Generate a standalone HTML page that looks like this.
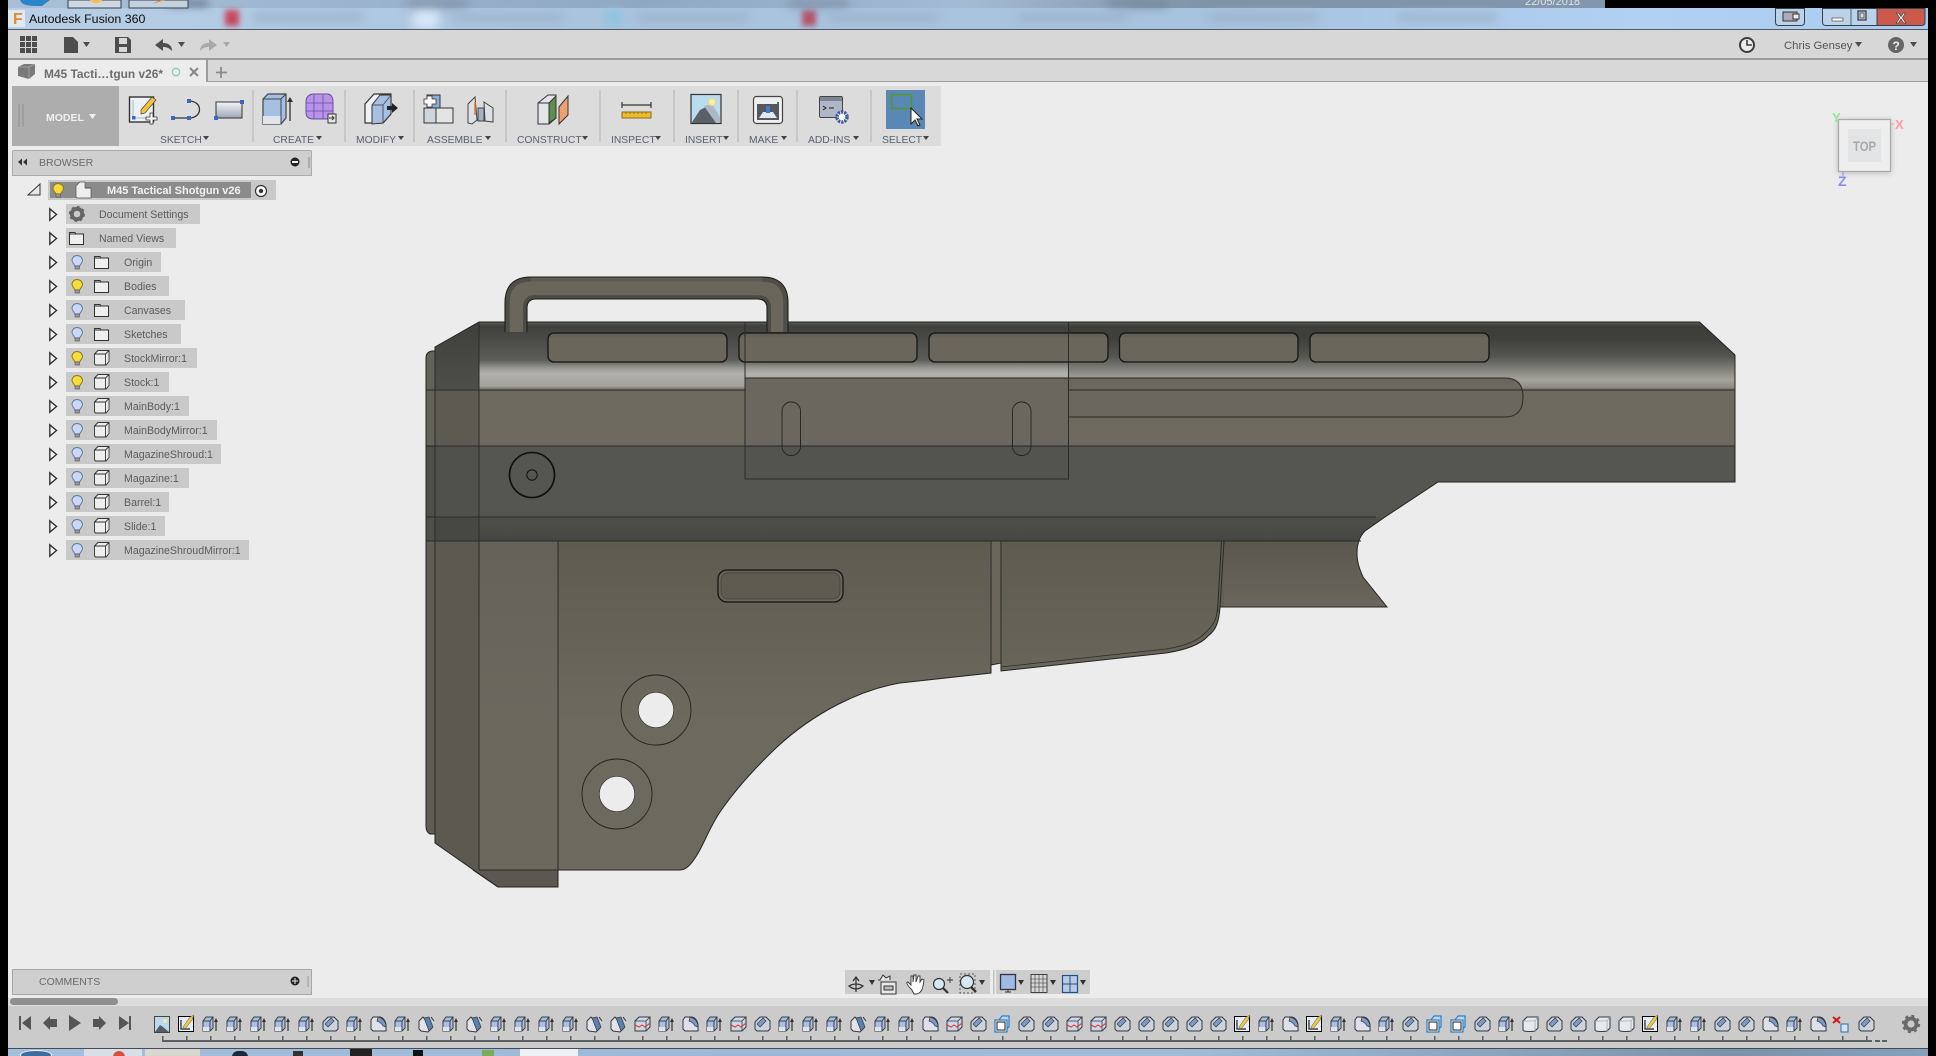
<!DOCTYPE html>
<html><head><meta charset="utf-8"><title>Autodesk Fusion 360</title>
<style>
html,body{margin:0;padding:0;width:1936px;height:1056px;overflow:hidden;background:#000}
.a{position:absolute}
svg{position:absolute;left:0;top:0}
text{font-family:"Liberation Sans",sans-serif}
.r{fill:#c9c9c9}.t{font-size:10.6px;fill:#5c5c5c}
.l{font-size:10.3px;fill:#5b6072}
</style></head><body>
<div class="a" style="left:8px;top:0;width:1597px;height:8px;background:linear-gradient(90deg,#a9bfd6,#9db5cf 20%,#8fa8c2 40%,#a3bbd4 60%,#7f93a8 75%,#8297ad);overflow:hidden"></div>
<div class="a" style="left:8px;top:8px;width:1920px;height:21px;background:linear-gradient(90deg,#b8cfe6,#aac4de 30%,#a8c3e0 65%,#b2d0f2 85%,#aacbf0)"></div>
<div class="a" style="left:8px;top:0;width:1597px;height:29px;overflow:hidden">
<div class="a" style="left:217px;top:10px;width:14px;height:16px;background:#c9485e;filter:blur(3px)"></div>
<div class="a" style="left:405px;top:8px;width:26px;height:21px;background:#d7e8f8;filter:blur(5px)"></div>
<div class="a" style="left:598px;top:10px;width:16px;height:16px;background:#8fc4e0;filter:blur(4px)"></div>
<div class="a" style="left:794px;top:10px;width:14px;height:16px;background:#b4546c;filter:blur(3px)"></div>
<div class="a" style="left:160px;top:0;width:40px;height:7px;background:#6f8198;filter:blur(4px)"></div>
<div class="a" style="left:400px;top:0;width:60px;height:7px;background:#7b8da3;filter:blur(5px)"></div>
<div class="a" style="left:780px;top:0;width:60px;height:7px;background:#7b8da3;filter:blur(5px)"></div>
<div class="a" style="left:1100px;top:0;width:60px;height:7px;background:#71849a;filter:blur(5px)"></div>
<div class="a" style="left:245px;top:13px;width:110px;height:9px;background:#9db3cc;filter:blur(5px)"></div>
<div class="a" style="left:445px;top:13px;width:110px;height:9px;background:#9db3cc;filter:blur(5px)"></div>
<div class="a" style="left:630px;top:13px;width:110px;height:9px;background:#9db3cc;filter:blur(5px)"></div>
<div class="a" style="left:820px;top:13px;width:110px;height:9px;background:#9db3cc;filter:blur(5px)"></div>
<div class="a" style="left:1010px;top:13px;width:110px;height:9px;background:#9db3cc;filter:blur(5px)"></div>
<div class="a" style="left:1200px;top:13px;width:110px;height:9px;background:#9db3cc;filter:blur(5px)"></div>
<div class="a" style="left:1390px;top:13px;width:100px;height:9px;background:#9db3cc;filter:blur(5px)"></div>
</div>
<div class="a" style="left:8px;top:29px;width:1920px;height:1px;background:#4f5a66"></div>
<div class="a" style="left:8px;top:30px;width:1920px;height:28px;background:#d7d7d7"></div>
<div class="a" style="left:8px;top:58px;width:1920px;height:2px;background:#9a9a9a"></div>
<div class="a" style="left:8px;top:60px;width:1920px;height:21px;background:#d8d8d8"></div>
<div class="a" style="left:8px;top:81px;width:1920px;height:1px;background:#9c9c9c"></div>
<div class="a" style="left:8px;top:82px;width:1920px;height:916px;background:#ececec"></div>
<div class="a" style="left:8px;top:60px;width:198px;height:22px;background:#ececec"></div>
<div class="a" style="left:206px;top:60px;width:2px;height:22px;background:#9c9c9c"></div>
<div class="a" style="left:8px;top:998px;width:1920px;height:8px;background:#dcdcdc"></div>
<div class="a" style="left:10px;top:998px;width:108px;height:7px;background:#8f8f8f;border-radius:4px"></div>
<div class="a" style="left:8px;top:1006px;width:1920px;height:42px;background:#cbcbcb"></div>
<div class="a" style="left:8px;top:1048px;width:1920px;height:1px;background:#444c55"></div>
<div class="a" style="left:8px;top:1049px;width:1920px;height:7px;background:linear-gradient(90deg,#a4bfdc,#9cb8d6 40%,#a2bcd8 60%,#7d92aa 90%,#86a0bc);overflow:hidden">
<div class="a" style="left:76px;top:0;width:58px;height:7px;background:#d8dfe6"></div>
<div class="a" style="left:137px;top:0;width:55px;height:7px;background:#d8d8d0"></div>
<div class="a" style="left:512px;top:0;width:58px;height:7px;background:#eef2f6"></div>
<div class="a" style="left:224px;top:2px;width:16px;height:6px;background:#1c2a3c;border-radius:8px 8px 0 0"></div>
<div class="a" style="left:285px;top:2px;width:10px;height:6px;background:#333"></div>
<div class="a" style="left:342px;top:0;width:22px;height:7px;background:#222"></div>
<div class="a" style="left:405px;top:1px;width:10px;height:6px;background:#111"></div>
<div class="a" style="left:474px;top:1px;width:12px;height:6px;background:#7cab5a"></div>
<div class="a" style="left:105px;top:2px;width:12px;height:6px;background:#d6503a;border-radius:6px 6px 0 0"></div>
<div class="a" style="left:12px;top:1px;width:30px;height:8px;border:1px solid #f0f6fc;border-radius:50%;background:#3d6da0"></div>
</div>
<div class="a" style="left:1605px;top:0;width:331px;height:8px;background:#000"></div>
<div class="a" style="left:0;top:0;width:8px;height:1056px;background:#000"></div>
<div class="a" style="left:1928px;top:0;width:8px;height:1056px;background:#000"></div>
<!-- toolbar backgrounds -->
<div class="a" style="left:12px;top:86px;width:929px;height:60px;background:#dcdcdc"></div>
<div class="a" style="left:12px;top:86px;width:107px;height:60px;background:#adadad"></div>
<div class="a" style="left:12px;top:150px;width:298px;height:24px;background:#cfcfcf;border:1px solid #ababab;border-radius:2px 2px 0 0"></div>
<div class="a" style="left:12px;top:969px;width:298px;height:24px;background:#cfcfcf;border:1px solid #a8a8a8"></div>
<div class="a" style="left:845px;top:970px;width:145px;height:24px;background:#cdcdcd"></div>
<div class="a" style="left:996px;top:970px;width:94px;height:24px;background:#cdcdcd"></div>

<svg width="1936" height="1056" viewBox="0 0 1936 1056">
<defs>
<linearGradient id="top" gradientUnits="userSpaceOnUse" x1="0" y1="322" x2="0" y2="390">
<stop offset="0" stop-color="#5a5a56"/><stop offset=".06" stop-color="#3f3f3b"/><stop offset=".34" stop-color="#4f504c"/><stop offset=".56" stop-color="#5c5d59"/><stop offset=".68" stop-color="#9a9993"/><stop offset=".76" stop-color="#b2b0ab"/><stop offset=".94" stop-color="#a6a49d"/><stop offset="1" stop-color="#6e6a61"/></linearGradient>
<linearGradient id="topr" gradientUnits="userSpaceOnUse" x1="0" y1="322" x2="0" y2="390">
<stop offset="0" stop-color="#5a5a56"/><stop offset=".06" stop-color="#3e3e39"/><stop offset=".25" stop-color="#3f3f3b"/><stop offset=".5" stop-color="#545551"/><stop offset=".68" stop-color="#7d7c76"/><stop offset=".85" stop-color="#a5a39c"/><stop offset=".96" stop-color="#8e8c84"/><stop offset="1" stop-color="#6e6a61"/></linearGradient>
<linearGradient id="ltop" gradientUnits="userSpaceOnUse" x1="0" y1="322" x2="0" y2="390"><stop offset="0" stop-color="#3f3f3b"/><stop offset="1" stop-color="#4e4e4a"/></linearGradient>
<linearGradient id="lb" x1="0" y1="0" x2="0" y2="1"><stop offset="0" stop-color="#50504b"/><stop offset="1" stop-color="#464642"/></linearGradient>
<linearGradient id="low" gradientUnits="userSpaceOnUse" x1="0" y1="541" x2="0" y2="720"><stop offset="0" stop-color="#5e5b51"/><stop offset="1" stop-color="#6c695f"/></linearGradient>
<linearGradient id="low2" gradientUnits="userSpaceOnUse" x1="0" y1="541" x2="0" y2="720"><stop offset="0" stop-color="#65625a"/><stop offset="1" stop-color="#6b685e"/></linearGradient>
<linearGradient id="mz" x1="0" y1="0" x2="0" y2="1"><stop offset="0" stop-color="#5b574e"/><stop offset="1" stop-color="#6b675e"/></linearGradient>
<linearGradient id="sq" x1="0" y1="0" x2="0" y2="1"><stop offset="0" stop-color="#5f5c53"/><stop offset=".2" stop-color="#6a665c"/><stop offset="1" stop-color="#6a665c"/></linearGradient>
<clipPath id="g"><path id="sil" d="M479 322H1699.5L1735 355V482H1438L1385 517L1365 531C1359 537 1357 545 1357 553C1357 563 1360 570 1363 577L1387 607H1220C1219 622 1216 630 1208 636C1200 645 1185 650 1166 653L1001 671V663L991 665V673L900 683C860 690 815 712 777 747C755 768 735 790 720 812C708 830 703 847 695 858C690 866 685 870 680 870H558V887H498L435 843V834H430Q426 832 426 826V358Q426 352 432 351H435V347Z"/></clipPath>
<g id="e"><path d="M1 5L4 1H11V12L8 15H1Z" fill="#a9c0de" stroke="#3a3f48"/><path d="M1 11H8V15H1Z" fill="#dfe3ea"/><path d="M1 5H8V15M8 5L11 1" fill="none" stroke="#3a3f48"/><path d="M14 15V5" stroke="#333" stroke-width="1.2"/><path d="M12 6L14 2L16 6Z" fill="#333"/></g>
<g id="c"><path d="M1 6L6 1H12L16 5V13L14 15H3L1 13Z" fill="#cdd3dd" stroke="#33383f"/><path d="M3 8L9 2L12 5L6 11Z" fill="#7f9bc8" stroke="#33383f" stroke-width=".7"/></g>
<g id="r"><path d="M1 4L3 1H10C14 2 16 6 16 10V15H3L1 13Z" fill="#dfe2e8" stroke="#33383f"/><path d="M8 1C13 2 16 6 16 11L13 10C12 8 10 6 7 5Z" fill="#7e9ac6" stroke="#33383f" stroke-width=".7"/></g>
<g id="m"><path d="M1 5L5 1L14 12L10 16L3 15L1 13Z" fill="#e3e5ea" stroke="#33383f"/><path d="M6 2L11 1L15 11L11 15Z" fill="#5f7fb2" stroke="#33383f" stroke-width=".7"/><path d="M13 1L16 5" stroke="#333"/></g>
<g id="w"><path d="M1 5L5 1H16V11L12 15H1Z" fill="#cdd7e6" stroke="#33383f"/><path d="M1 5H12V15M12 5L16 1" fill="none" stroke="#33383f" stroke-width=".8"/><path d="M1 9L5 11L8 9L11 11L16 7" fill="none" stroke="#d33" stroke-width="1"/></g>
<g id="k"><path d="M5 4L8 0H15V11L12 13" fill="#bdd5f0" stroke="#0a6fc2"/><rect x="1" y="4" width="12" height="12" fill="#f0f0f0" stroke="#0a6fc2"/><rect x="3" y="6" width="8" height="8" fill="#fff" stroke="#222"/></g>
<g id="b"><path d="M1 5L5 1H16V12L13 15Q8 16 2 15L1 14Z" fill="#e8eaee" stroke="#33383f"/><path d="M1 5H13V15M13 5L16 1" fill="none" stroke="#9aa" stroke-width=".8"/></g>
<g id="s"><rect x=".5" y=".5" width="15" height="15" fill="#e4ecf6" stroke="#000"/><path d="M3 4V13H12" fill="none" stroke="#222" stroke-width="1.2"/><path d="M5 11L12 1L16 -1L14 4L7 13Z" fill="#f0c83a" stroke="#555" stroke-width=".5"/></g>
<g id="i"><rect x=".5" y=".5" width="15" height="16" fill="#bcd8ec" stroke="#444"/><path d="M1 16L6 9L9 11L15 16Z" fill="#555b64"/><circle cx="11" cy="5" r="2" fill="#f6e9a8"/></g>
<g id="bu"><path d="M6 .5C9.2.5 11.5 2.8 11.5 5.5C11.5 8 9 9 8.8 11H3.8C3.6 9 1 8 1 5.5C1 2.8 3.2.5 6 .5Z" fill="#c8d8f7" stroke="#6a78a0"/><rect x="4" y="11" width="4.5" height="3" fill="#999" stroke="#555" stroke-width=".6"/></g>
<g id="by"><path d="M6 .5C9.2.5 11.5 2.8 11.5 5.5C11.5 8 9 9 8.8 11H3.8C3.6 9 1 8 1 5.5C1 2.8 3.2.5 6 .5Z" fill="#f6dc3a" stroke="#8a7a20"/><rect x="4" y="11" width="4.5" height="3" fill="#999" stroke="#555" stroke-width=".6"/></g>
<g id="fo"><path d="M.5 1.5H6L7 3H14.5V13.5H.5ZM.5 3H7" fill="#efefef" stroke="#333" stroke-width="1"/></g>
<g id="bd"><path d="M.5 4L4 .5H15V11.5L12 15H2Q.5 15 .5 13.5ZM.5 4H11.5V15M11.5 4L15 .5" fill="#eeeeee" stroke="#333" stroke-width=".9"/></g>
<g id="tri"><path d="M.8 .8L7.5 6.5L.8 12.2Z" fill="#f2f2f2" stroke="#333" stroke-width="1.4"/></g>
</defs>

<!-- title -->
<rect x="8" y="10" width="17" height="17" fill="#f0f3f7" opacity=".7"/>
<text x="13" y="24" font-size="16" font-weight="bold" fill="#e08a2e">F</text>
<text x="29" y="23" font-size="12.4" fill="#0c0c0c">Autodesk Fusion 360</text>
<text x="1525" y="5" font-size="11" fill="#f0f0f0" opacity=".85">22/05/2018</text>
<g stroke="#34404c" stroke-width="1" fill="#a9c2dc">
<path d="M68 0H121V8H68Z" fill="#cdd8e2"/><path d="M129 0H188V8H129Z" fill="#c4d2e0"/>
<path d="M1775.5 8.5H1804.5V22Q1804.5 25.5 1801 25.5H1779Q1775.5 25.5 1775.5 22Z" fill="#bcd2ea"/>
<path d="M1822.5 8.5H1877V25.5H1826Q1822.5 25.5 1822.5 22Z" fill="#bcd2ea"/>
<path d="M1877 8.5H1925V22Q1925 25.5 1921.5 25.5H1877Z" fill="#cc5a4c"/>
</g>
<path d="M1851 9V25" stroke="#566"/>
<path d="M20 0C22 6 30 6 42 6L50 0Z" fill="#2a86c8"/>
<path d="M90 0C92 4 100 4 102 0Z" fill="#f0c050"/><path d="M152 4L160 0H165Z" fill="#d98b2e"/>
<rect x="1783" y="12" width="14" height="9" fill="#aab" stroke="#333"/><rect x="1793" y="14" width="6" height="5" fill="#eee" stroke="#333"/>
<rect x="1832" y="18" width="11" height="3" fill="#fff" stroke="#333" stroke-width=".6"/>
<rect x="1858" y="11" width="8" height="9" fill="none" stroke="#333" stroke-width="1.2"/><rect x="1860" y="13" width="4" height="5" fill="#ddd" stroke="#333" stroke-width=".7"/>
<text x="1896" y="23" font-size="15" font-weight="bold" fill="#f4f4f4" stroke="#444" stroke-width=".7">X</text>

<!-- app bar -->
<g fill="#4d4d4d">
<rect x="20" y="36" width="5" height="5"/><rect x="26" y="36" width="5" height="5"/><rect x="32" y="36" width="5" height="5"/>
<rect x="20" y="42" width="5" height="5"/><rect x="26" y="42" width="5" height="5"/><rect x="32" y="42" width="5" height="5"/>
<rect x="20" y="48" width="5" height="5"/><rect x="26" y="48" width="5" height="5"/><rect x="32" y="48" width="5" height="5"/>
<path d="M64 37H73L78 42V53H64Z"/><path d="M83 42H90L86.5 47Z"/>
<path fill-rule="evenodd" d="M115 37H128L131 40V53H115ZM119 38V44H127V38ZM119 47V52H127V47Z"/>
<path d="M155 45L163 39V43C169 43 172 46 172 51C169 48 167 47 163 47V51Z"/><path d="M178 42H185L181.5 47Z"/>
<path d="M1855 42H1862L1858.5 47Z"/><path d="M1910 42H1917L1913.5 47Z"/>
</g>
<g fill="#a9a9a9"><path d="M217 45L209 39V43C203 43 200 46 200 51C203 48 205 47 209 47V51Z"/><path d="M223 42H230L226.5 47Z"/></g>
<circle cx="1747" cy="45" r="7" fill="#ececec" stroke="#3c3c3c" stroke-width="2"/><path d="M1747 40V45H1752" fill="none" stroke="#3c3c3c" stroke-width="1.6"/>
<text x="1784" y="49" font-size="11.3" fill="#545454">Chris Gensey</text>
<circle cx="1896" cy="45" r="8" fill="#666"/><text x="1892.5" y="50" font-size="12" font-weight="bold" fill="#eee">?</text>

<!-- tab -->
<path d="M18 67L24 64H35V74L29 79L18 76Z" fill="#7a7a7a"/><path d="M18 67H29V79M29 67L35 64" stroke="#aaa" fill="none" stroke-width=".8"/>
<text x="44" y="78" font-size="12" font-weight="bold" fill="#6d6d6d" textLength="119" lengthAdjust="spacingAndGlyphs">M45 Tacti…tgun v26*</text>
<circle cx="176" cy="72" r="3.7" fill="none" stroke="#84cdb8" stroke-width="1.3"/>
<path d="M190 68L198 76M198 68L190 76" stroke="#8a8a8a" stroke-width="2.2"/>
<path d="M221 67V78M216 72.5H227" stroke="#8a8a8a" stroke-width="1.8"/>

<!-- model -->
<path d="M19 104V127M23 104V127" stroke="#8f8f8f"/>
<text x="46" y="121" font-size="10.5" font-weight="bold" fill="#f0f0f0">MODEL</text>
<path d="M89 114H96L92.5 119Z" fill="#f0f0f0"/>
<!-- separators -->
<g fill="#c8c8c8"><rect x="252" y="90" width="2" height="52"/><rect x="344" y="90" width="2" height="52"/><rect x="413" y="90" width="2" height="52"/><rect x="505" y="90" width="2" height="52"/><rect x="599" y="90" width="2" height="52"/><rect x="673" y="90" width="2" height="52"/><rect x="737" y="90" width="2" height="52"/><rect x="796" y="90" width="2" height="52"/><rect x="870" y="90" width="2" height="52"/></g>
<!-- labels -->
<text x="160" y="143" class="l">SKETCH</text><path d="M203 136H209L206 140Z" fill="#444"/>
<text x="273" y="143" class="l">CREATE</text><path d="M316 136H322L319 140Z" fill="#444"/>
<text x="356" y="143" class="l">MODIFY</text><path d="M398 136H404L401 140Z" fill="#444"/>
<text x="427" y="143" class="l">ASSEMBLE</text><path d="M485 136H491L488 140Z" fill="#444"/>
<text x="517" y="143" class="l">CONSTRUCT</text><path d="M582 136H588L585 140Z" fill="#444"/>
<text x="611" y="143" class="l">INSPECT</text><path d="M655 136H661L658 140Z" fill="#444"/>
<text x="685" y="143" class="l">INSERT</text><path d="M723 136H729L726 140Z" fill="#444"/>
<text x="749" y="143" class="l">MAKE</text><path d="M781 136H787L784 140Z" fill="#444"/>
<text x="808" y="143" class="l">ADD-INS</text><path d="M853 136H859L856 140Z" fill="#444"/>
<text x="882" y="143" class="l">SELECT</text><path d="M923 136H929L926 140Z" fill="#444"/>
<!-- toolbar icons -->
<rect x="129.5" y="97" width="24" height="25" fill="#eef1f6" stroke="#333" stroke-width="1.4"/>
<path d="M133 100V118H150" fill="none" stroke="#8aa" stroke-width=".8"/><rect x="132" y="116" width="3.5" height="3.5" fill="#3a68c0"/>
<path d="M141 110L152 97L156 100L145 113L141 114Z" fill="#f2c43a" stroke="#444" stroke-width=".7"/>
<path d="M150 113H153V117H157V120H153V124H150V120H146V117H150Z" fill="#fff" stroke="#333" stroke-width=".8"/>
<path d="M173 118H188M189 101C203 101 203 118 189 118" fill="none" stroke="#333" stroke-width="1.3"/>
<rect x="171" y="116" width="4" height="4" fill="#3a68c0"/><rect x="187" y="116" width="4" height="4" fill="#3a68c0"/><rect x="187" y="99" width="4" height="4" fill="#3a68c0"/>
<defs><linearGradient id="rc" x1="0" y1="0" x2="0" y2="1"><stop offset="0" stop-color="#f5f5f7"/><stop offset="1" stop-color="#9ea7b8"/></linearGradient></defs>
<rect x="216" y="102" width="26" height="16" fill="url(#rc)" stroke="#333"/><rect x="240" y="100" width="4" height="4" fill="#3a68c0"/><rect x="214" y="116" width="4" height="4" fill="#3a68c0"/>
<path d="M263 99L268 94H286V118L281 124H263Z" fill="#a6c0e4" stroke="#444" stroke-width="1.2"/><path d="M263 116H281V124H263Z" fill="#dfe3ea"/><path d="M263 99H281V124M281 99L286 94" fill="none" stroke="#444"/>
<path d="M290 121V100" stroke="#333" stroke-width="1.3"/><path d="M287 102L290 97L293 102Z" fill="#333"/>
<path d="M306 102Q306 95 313 94H328Q333 95 333 102V116Q333 119 328 119H313Q306 119 306 112Z" fill="#b794e8" stroke="#6a4ba0"/>
<path d="M306 103H333M306 111H333M314 95V119M323 95V119" stroke="#6a4ba0" stroke-width=".8"/>
<rect x="328" y="114" width="8" height="9" fill="#e8e8e8" stroke="#333"/><path d="M329 118H333M332 116L334 118L332 120" stroke="#333" fill="none"/>
<path d="M365 123V104L374 94H391V114L383 123Z" fill="#f0f1f4" stroke="#333" stroke-width="1.2"/><path d="M372 124V105L380 95H391V114L383 123Z" fill="#a6c0e4" stroke="#333"/><path d="M372 105H383V123M383 105L391 95" stroke="#555" fill="none"/>
<path d="M387 106H392V103L398 108L392 113V110H387Z" fill="#222"/>
<rect x="435" y="108" width="18" height="15" fill="#e4e4e4" stroke="#333"/><rect x="424" y="108" width="12" height="15" fill="#cfd5dd" stroke="#333"/><rect x="427" y="95" width="13" height="13" fill="#8cabd6" stroke="#333"/>
<path d="M427 96H432V99H436V104H432V107H427V104H424V99H427Z" fill="#fff" stroke="#333" stroke-width=".8"/>
<path d="M468 123V104L475 97L477 120L472 124ZM484 102L493 108V122L485 121Z" fill="#dde0e6" stroke="#444"/><rect x="478" y="108" width="6" height="13" fill="#a6b2c4" stroke="#444"/><path d="M475 102V115" stroke="#d97a2e" stroke-width="1.5"/>
<path d="M538 103L548 95H556V118L549 124H538Z" fill="#e3e5ea" stroke="#333"/><path d="M549 103L556 96V118L549 123Z" fill="#5d8e4e" stroke="#333"/><path d="M538 103H549V124" fill="none" stroke="#333"/>
<path d="M559 107L568 96V115L559 124Z" fill="#eca16e" stroke="#333"/>
<path d="M622 102V108M651 102V108M622 105H651" stroke="#333" stroke-width="1.2"/>
<rect x="622" y="112" width="29" height="6" fill="#edb92f" stroke="#8a6a10"/><path d="M626 112v2M630 112v2M634 112v2M638 112v2M642 112v2M646 112v2" stroke="#8a6a10"/>
<rect x="691" y="94.5" width="30" height="29" fill="#b9dcef" stroke="#333" stroke-width="1.2"/>
<path d="M691.5 123L700 110L706 107L713 115L720 123Z" fill="#5a606a"/><path d="M704 106L712 104L720.5 118V123H716Z" fill="#aeb8c2"/>
<circle cx="712" cy="102" r="3.5" fill="#f9f0b0" stroke="#f1d87a"/>
<rect x="753.5" y="96.5" width="29" height="27" rx="3" fill="#efefef" stroke="#444" stroke-width="1.2"/><rect x="757" y="104" width="22" height="16" fill="#55585e"/><path d="M759 118L763 112H773L777 118Z" fill="#e3e6ea"/><rect x="766" y="106" width="4" height="7" fill="#3f7cc8"/><rect x="777" y="102" width="2" height="2" fill="#2a8a2a"/>
<rect x="819.5" y="96.5" width="23" height="21" rx="1.5" fill="#aeb6c8" stroke="#444"/><rect x="820" y="97" width="22" height="4" fill="#7f8590"/>
<path d="M823 106L826 108L823 110M829 108H834" stroke="#222" fill="none"/>
<circle cx="842" cy="117" r="5" fill="#fff" stroke="#3c5d96" stroke-width="3.5" stroke-dasharray="2.2 1"/><circle cx="842" cy="117" r="3" fill="#fff"/>
<rect x="886" y="90" width="39" height="39" fill="#5a88b5"/><rect x="891.5" y="94.5" width="20" height="14" fill="none" stroke="#4f9a1f" stroke-width="1.4"/>
<path d="M911 108V124L915 120L918 126L920 125L917 119H922Z" fill="#fff" stroke="#222"/>

<!-- browser head -->
<path d="M18 162L22 158.5V165.5ZM23 162L27 158.5V165.5Z" fill="#333"/>
<text x="39" y="166" font-size="10.5" fill="#6a6a6a">BROWSER</text>
<circle cx="295" cy="162" r="4.5" fill="#222"/><rect x="292" y="161" width="6" height="2" fill="#eee"/>
<path d="M309 157V168" stroke="#888"/><path d="M311 157V168" stroke="#bbb"/>
<!-- comments -->
<text x="39" y="985" font-size="10.5" fill="#6a6a6a">COMMENTS</text>
<circle cx="295" cy="981" r="4.5" fill="#222"/><path d="M292 981H298M295 978V984" stroke="#eee"/>
<path d="M308 976V987" stroke="#999"/>

<!-- tree -->
<path d="M28 195L40 184V195Z" fill="#e8e8e8" stroke="#333"/>
<rect x="48" y="180" width="228" height="20" class="r"/><rect x="50" y="182" width="201" height="16" fill="#8b8b8b"/>
<use href="#by" x="52" y="183"/>
<path d="M76 186L80 182H85V188H91V198H78Q76 198 76 196Z" fill="#eee" stroke="#555" stroke-width=".7"/><path d="M85 188L91 188" stroke="#555"/>
<text x="107" y="194" font-size="11" font-weight="bold" fill="#f2f2f2">M45 Tactical Shotgun v26</text>
<circle cx="261" cy="191" r="5.5" fill="#fff" stroke="#333" stroke-width="1.2"/><circle cx="261" cy="191" r="2.2" fill="#333"/>

<rect x="66" y="204" width="134" height="20" class="r"/><rect x="66" y="228" width="110" height="20" class="r"/><rect x="66" y="252" width="95" height="20" class="r"/><rect x="66" y="276" width="103" height="20" class="r"/><rect x="66" y="300" width="119" height="20" class="r"/><rect x="66" y="324" width="115" height="20" class="r"/><rect x="66" y="348" width="131" height="20" class="r"/><rect x="66" y="372" width="103" height="20" class="r"/><rect x="66" y="396" width="123" height="20" class="r"/><rect x="66" y="420" width="151" height="20" class="r"/><rect x="66" y="444" width="155" height="20" class="r"/><rect x="66" y="468" width="123" height="20" class="r"/><rect x="66" y="492" width="103" height="20" class="r"/><rect x="66" y="516" width="99" height="20" class="r"/><rect x="66" y="540" width="183" height="20" class="r"/>
<use href="#tri" x="49" y="208"/><use href="#tri" x="49" y="232"/><use href="#tri" x="49" y="256"/><use href="#tri" x="49" y="280"/><use href="#tri" x="49" y="304"/><use href="#tri" x="49" y="328"/><use href="#tri" x="49" y="352"/><use href="#tri" x="49" y="376"/><use href="#tri" x="49" y="400"/><use href="#tri" x="49" y="424"/><use href="#tri" x="49" y="448"/><use href="#tri" x="49" y="472"/><use href="#tri" x="49" y="496"/><use href="#tri" x="49" y="520"/><use href="#tri" x="49" y="544"/>
<circle cx="77" cy="214" r="5.2" fill="none" stroke="#666" stroke-width="3.8"/><circle cx="77" cy="214" r="6.8" fill="none" stroke="#666" stroke-width="2.4" stroke-dasharray="2.6 2.7"/>
<use href="#fo" x="69" y="231"/>
<use href="#bu" x="71" y="255"/><use href="#by" x="71" y="279"/><use href="#bu" x="71" y="303"/><use href="#bu" x="71" y="327"/><use href="#by" x="71" y="351"/><use href="#by" x="71" y="375"/><use href="#bu" x="71" y="399"/><use href="#bu" x="71" y="423"/><use href="#bu" x="71" y="447"/><use href="#bu" x="71" y="471"/><use href="#bu" x="71" y="495"/><use href="#bu" x="71" y="519"/><use href="#bu" x="71" y="543"/>
<use href="#fo" x="94" y="255"/><use href="#fo" x="94" y="279"/><use href="#fo" x="94" y="303"/><use href="#fo" x="94" y="327"/>
<use href="#bd" x="94" y="350"/><use href="#bd" x="94" y="374"/><use href="#bd" x="94" y="398"/><use href="#bd" x="94" y="422"/><use href="#bd" x="94" y="446"/><use href="#bd" x="94" y="470"/><use href="#bd" x="94" y="494"/><use href="#bd" x="94" y="518"/><use href="#bd" x="94" y="542"/>
<g class="t"><text x="99" y="218" class="t">Document Settings</text><text x="99" y="242" class="t">Named Views</text><text x="124" y="266" class="t">Origin</text><text x="124" y="290" class="t">Bodies</text><text x="124" y="314" class="t">Canvases</text><text x="124" y="338" class="t">Sketches</text><text x="124" y="362" class="t">StockMirror:1</text><text x="124" y="386" class="t">Stock:1</text><text x="124" y="410" class="t">MainBody:1</text><text x="124" y="434" class="t">MainBodyMirror:1</text><text x="124" y="458" class="t">MagazineShroud:1</text><text x="124" y="482" class="t">Magazine:1</text><text x="124" y="506" class="t">Barrel:1</text><text x="124" y="530" class="t">Slide:1</text><text x="124" y="554" class="t">MagazineShroudMirror:1</text></g>

<!-- viewcube -->
<rect x="1838.5" y="119.5" width="52" height="52" fill="#eeeeee" stroke="#a9a9a9" stroke-width="1.2" style="filter:drop-shadow(0 1px 3px rgba(0,0,0,.2))"/>
<rect x="1848" y="129" width="33" height="33" fill="#e3e4e6"/>
<text x="1853" y="151" font-size="14" font-weight="bold" fill="#a9a9ab" textLength="23" lengthAdjust="spacingAndGlyphs">TOP</text>
<text x="1832" y="122" font-size="13" fill="#8fe88f" font-weight="bold">Y</text>
<text x="1895" y="129" font-size="13" fill="#ff9c9c" font-weight="bold">X</text>
<text x="1838" y="186" font-size="14" fill="#8c8cf0" font-weight="bold">Z</text>
<path d="M1891 124H1894" stroke="#ff9c9c"/><path d="M1843 172V176" stroke="#8c8cf0"/>

<!-- gun body -->
<g clip-path="url(#g)">
<rect x="420" y="320" width="650" height="71" fill="url(#top)"/>
<rect x="1068" y="320" width="672" height="71" fill="url(#topr)"/>
<rect x="420" y="390" width="1320" height="56" fill="#6d695f"/>
<rect x="420" y="446" width="1320" height="71" fill="#555650"/>
<rect x="420" y="517" width="1320" height="24" fill="url(#lb)"/>
<rect x="420" y="541" width="1000" height="360" fill="url(#low)"/>
<rect x="479" y="541" width="79" height="330" fill="url(#low2)"/>
<rect x="1224" y="541" width="170" height="70" fill="url(#mz)"/>
<path d="M1068 378H1505Q1523 378 1523 397Q1523 417 1505 417H1068Z" fill="#6b675e"/>
<rect x="745" y="378" width="324" height="68" fill="#6b675e"/>
<rect x="745" y="446" width="324" height="33" fill="#535450"/>
<rect x="435" y="322" width="44" height="68" fill="url(#ltop)"/>
<rect x="435" y="390" width="44" height="56" fill="#5c5a51"/>
<rect x="435" y="446" width="44" height="71" fill="#50514b"/>
<rect x="435" y="517" width="44" height="24" fill="#484843"/>
<rect x="435" y="541" width="44" height="350" fill="#5b5950"/>
<rect x="420" y="340" width="15" height="110" fill="#62615a"/>
<rect x="420" y="446" width="15" height="95" fill="#4f4f4a"/>
<rect x="420" y="541" width="15" height="300" fill="#5f5d54"/>
<path d="M473 870H558V887H498Z" fill="#5a5850"/>
<rect x="991" y="541" width="10" height="140" fill="#6a665c"/>
</g>
<!-- lines -->
<g fill="none" stroke="#2a2a27" stroke-width="1">
<path d="M479 322V870M435 347V843M426 390H435" />
<path d="M435 390H745M426 446H1735M426 517H1376M426 541H1361M558 541V887M479 870H558M473 870L498 887"/>
<path d="M745 322V479H1068.500V322M745 378H1505Q1523 378 1523 397Q1523 417 1505 417H1068.500M1068 390H1735"/>
<path d="M991 541V673M1001 541V671M1224 541L1220 607M1221.500 541L1217.500 612"/>
<path d="M1001 667L1166 649C1185 646 1198 641 1206 632C1214 625 1217 618 1217.500 608" stroke-width=".8"/>
</g>
<use href="#sil" fill="none" stroke="#232321" stroke-width="1"/>
<!-- handle drawn over body -->
<path d="M505 332V303Q505 277 531 277H762Q788 277 788 303V332H767V308Q767 299 757 299H536Q527 299 527 308V332Z" fill="#6a665c"/>
<path d="M507.500 332V303Q507.500 279.500 531 279.500" fill="none" stroke="#4f4f49" stroke-width="4.500"/>
<path d="M762 279.500Q785.500 279.500 785.500 303V332" fill="none" stroke="#4f4f49" stroke-width="4.500"/>
<path d="M531 279.500H762" stroke="#5c5a52" stroke-width="4"/>
<path d="M536 297H757" stroke="#4c4c46" stroke-width="3.500"/>
<path d="M525 332V308Q525 297 536 297M757 297Q769 297 769 308V332" fill="none" stroke="#4c4c46" stroke-width="4"/>
<path d="M505 332V303Q505 277 531 277H762Q788 277 788 303V332M767 332V308Q767 299 757 299H536Q527 299 527 308V332" fill="none" stroke="#1e1e1c" stroke-width="1.100"/>
<!-- slots -->
<g fill="url(#sq)" stroke="#141412" stroke-width="1.3">
<rect x="548" y="333" width="179" height="29" rx="6"/><rect x="739" y="333" width="178" height="29" rx="6"/><rect x="929" y="333" width="179" height="29" rx="6"/><rect x="1119.500" y="333" width="178.500" height="29" rx="6"/><rect x="1310" y="333" width="179" height="29" rx="6"/>
<rect x="718" y="570" width="125" height="32" rx="9"/>
</g>
<path d="M745 322V362M1068.500 322V362" stroke="#2a2a27"/>
<rect x="721" y="573" width="119" height="26" rx="7" fill="#5e5b51" stroke="#3a3a36" stroke-width=".6"/>
<g fill="none" stroke="#222" stroke-width=".9">
<rect x="782" y="402" width="18.500" height="53.500" rx="9"/><rect x="1012.500" y="402" width="18.500" height="53.500" rx="9"/>
</g>
<circle cx="532" cy="475" r="22.500" fill="none" stroke="#0e0e0e" stroke-width="1.6"/><circle cx="532" cy="475" r="5.200" fill="none" stroke="#161616" stroke-width="1.100"/>
<circle cx="656" cy="710" r="35" fill="none" stroke="#222" stroke-width=".9"/><circle cx="656" cy="710" r="17.700" fill="#ececec" stroke="#333" stroke-width=".7"/>
<circle cx="617" cy="794" r="35" fill="none" stroke="#222" stroke-width=".9"/><circle cx="617" cy="794" r="17.700" fill="#ececec" stroke="#333" stroke-width=".7"/>

<!-- nav bar -->
<g stroke="#333" fill="none">
<path d="M856 977V992M853 981L856 977L859 981M849 986Q856 982 863 986Q856 992 849 986Z" stroke-width="1.2"/>
<path d="M878 980H880L883 975L886 978L890 976V980M881 982H896V994H881Z" fill="#e8e8e8"/><rect x="884" y="986" width="9" height="4" fill="#bbb"/>
<path d="M912 990C906 984 906 982 908 982L911 985V976L913 976V982L914 975H916V982L918 976H920V982L922 979L924 980C923 986 923 992 917 994H914Z" fill="#fff" stroke-width=".9"/>
<circle cx="939" cy="984" r="5.500" fill="#d8e8f2" stroke-width="1.2"/><path d="M943 988L948 993" stroke-width="2.200"/><path d="M947 980H953M950 977V983" stroke-width=".9"/>
<rect x="960" y="974" width="15" height="19" stroke-dasharray="2 2" stroke-width=".7"/><circle cx="967" cy="982" r="6.500" fill="#d8e8f2" stroke-width="1.200"/><path d="M971 987L976 992" stroke-width="2.400"/>
<rect x="1000.500" y="974.500" width="15" height="15" fill="#9dbbe4" stroke-width="1.300"/><path d="M1005 992H1011M1008 990V992"/>
<rect x="1031" y="974.500" width="16" height="18" fill="#d8d8d8" stroke-width=".9"/><path d="M1031 979H1047M1031 983H1047M1031 987H1047M1035 975V992M1039 975V992M1043 975V992" stroke-width=".6"/>
<rect x="1062.500" y="975.500" width="15" height="17" fill="#b8cbe6" stroke="#2a4f80" stroke-width="1.200"/><path d="M1062 984H1078M1070 975V993" stroke="#2a4f80"/>
</g>
<g fill="#333"><path d="M869 980H875L872 985Z"/><path d="M979 980H985L982 985Z"/><path d="M1018 980H1024L1021 985Z"/><path d="M1050 980H1056L1053 985Z"/><path d="M1080 980H1086L1083 985Z"/></g>
<rect x="993" y="970" width="1.500" height="24" fill="#c0c0c0"/>

<!-- player -->
<g fill="#555"><rect x="19" y="1016" width="2" height="14"/><path d="M31 1016V1030L22 1023Z"/><path d="M43 1023L50 1016V1030Z"/><rect x="50" y="1019" width="7" height="8"/><path d="M69 1015L81 1023L69 1031Z"/><rect x="93" y="1019" width="6" height="8"/><path d="M99 1016L106 1023L99 1030Z"/><path d="M119 1016L129 1023L119 1030Z"/><rect x="129" y="1016" width="2" height="14"/></g>
<line x1="162" y1="1041" x2="1872" y2="1041" stroke="#5e5e5e" stroke-width="2"/>
<line x1="162" y1="1038" x2="1872" y2="1038" stroke="#5e5e5e" stroke-width="4" stroke-dasharray="1.500 22.500"/>
<path d="M1875 1041H1880M1882 1041H1887" stroke="#5e5e5e" stroke-width="2"/>
<circle cx="1911" cy="1024" r="5.500" fill="none" stroke="#6a6a6a" stroke-width="3.800"/><circle cx="1911" cy="1024" r="8" fill="none" stroke="#6a6a6a" stroke-width="2.400" stroke-dasharray="3 3.300"/>
<!-- timeline -->
<g transform="translate(0 1016)">
<use href="#i" x="154"/><use href="#s" x="178"/><use href="#e" x="202"/><use href="#e" x="226"/><use href="#e" x="250"/><use href="#e" x="274"/><use href="#e" x="298"/><use href="#c" x="322"/><use href="#e" x="346"/><use href="#r" x="370"/><use href="#e" x="394"/><use href="#m" x="418"/><use href="#e" x="442"/><use href="#m" x="466"/><use href="#e" x="490"/><use href="#e" x="514"/><use href="#e" x="538"/><use href="#e" x="562"/><use href="#m" x="586"/><use href="#m" x="610"/><use href="#w" x="634"/><use href="#e" x="658"/><use href="#r" x="682"/><use href="#e" x="706"/><use href="#w" x="730"/><use href="#c" x="754"/><use href="#e" x="778"/><use href="#e" x="802"/><use href="#e" x="826"/><use href="#m" x="850"/><use href="#e" x="874"/><use href="#e" x="898"/><use href="#r" x="922"/><use href="#w" x="946"/><use href="#c" x="970"/><use href="#k" x="994"/><use href="#c" x="1018"/><use href="#c" x="1042"/><use href="#w" x="1066"/><use href="#w" x="1090"/><use href="#c" x="1114"/><use href="#c" x="1138"/><use href="#c" x="1162"/><use href="#c" x="1186"/><use href="#c" x="1210"/><use href="#s" x="1234"/><use href="#e" x="1258"/><use href="#r" x="1282"/><use href="#s" x="1306"/><use href="#e" x="1330"/><use href="#r" x="1354"/><use href="#e" x="1378"/><use href="#c" x="1402"/><use href="#k" x="1426"/><use href="#k" x="1450"/><use href="#c" x="1474"/><use href="#e" x="1498"/><use href="#b" x="1522"/><use href="#c" x="1546"/><use href="#c" x="1570"/><use href="#b" x="1594"/><use href="#b" x="1618"/><use href="#s" x="1642"/><use href="#e" x="1666"/><use href="#e" x="1690"/><use href="#c" x="1714"/><use href="#c" x="1738"/><use href="#r" x="1762"/><use href="#e" x="1786"/><use href="#r" x="1810"/>
<path d="M1833 1L1840 7M1840 1L1833 7" stroke="#d01818" stroke-width="2"/><rect x="1841" y="8" width="7" height="8" fill="#d8e4f2" stroke="#2a6fb0"/><use href="#c" x="1858"/>
</g>
</svg>
</body></html>
